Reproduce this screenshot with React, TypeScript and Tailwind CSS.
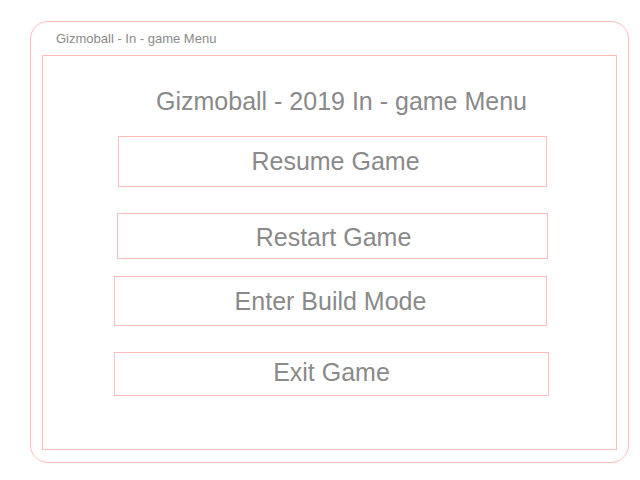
export default function App() {
  const buttons = [
    { label: "Resume Game", box: "mt-[20px] ml-[75px] w-[429px] h-[51px]", text: "pl-[6px]" },
    { label: "Restart Game", box: "mt-[26px] ml-[74px] w-[431px] h-[46px]", text: "pl-[2px] pt-[2px]" },
    { label: "Enter Build Mode", box: "mt-[17px] ml-[71px] w-[433px] h-[50px]", text: "pl-0" },
    { label: "Exit Game", box: "mt-[26px] ml-[71px] w-[435px] h-[44px]", text: "pl-0 pb-[4px]" },
  ];

  return (
    <div className="w-[640px] h-[480px] bg-white pt-[21px] pl-[30px] font-['Liberation_Sans',Arial,sans-serif] text-[#8a8a8a]">
      <div className="w-[599px] h-[442px] border border-[#ffbcbc] rounded-[18px] flex flex-col">
        {/* window title */}
        <div className="h-[33px] pl-[25px] pt-[9px] text-[13px] leading-[16px]">
          Gizmoball - In - game Menu
        </div>

        {/* inner panel */}
        <div className="ml-[11px] w-[575px] h-[395px] border border-[#ffbcbc] flex flex-col items-start">
          <div className="pt-[30px] pl-[113px] text-[25px] leading-[30px] whitespace-nowrap">
            Gizmoball - 2019 In - game Menu
          </div>

          {buttons.map((b) => (
            <div
              key={b.label}
              className={`${b.box} border border-[#ffbcbc] flex items-center justify-center`}
            >
              <span className={`${b.text} text-[25px] leading-none whitespace-nowrap`}>{b.label}</span>
            </div>
          ))}
        </div>
      </div>
    </div>
  );
}
